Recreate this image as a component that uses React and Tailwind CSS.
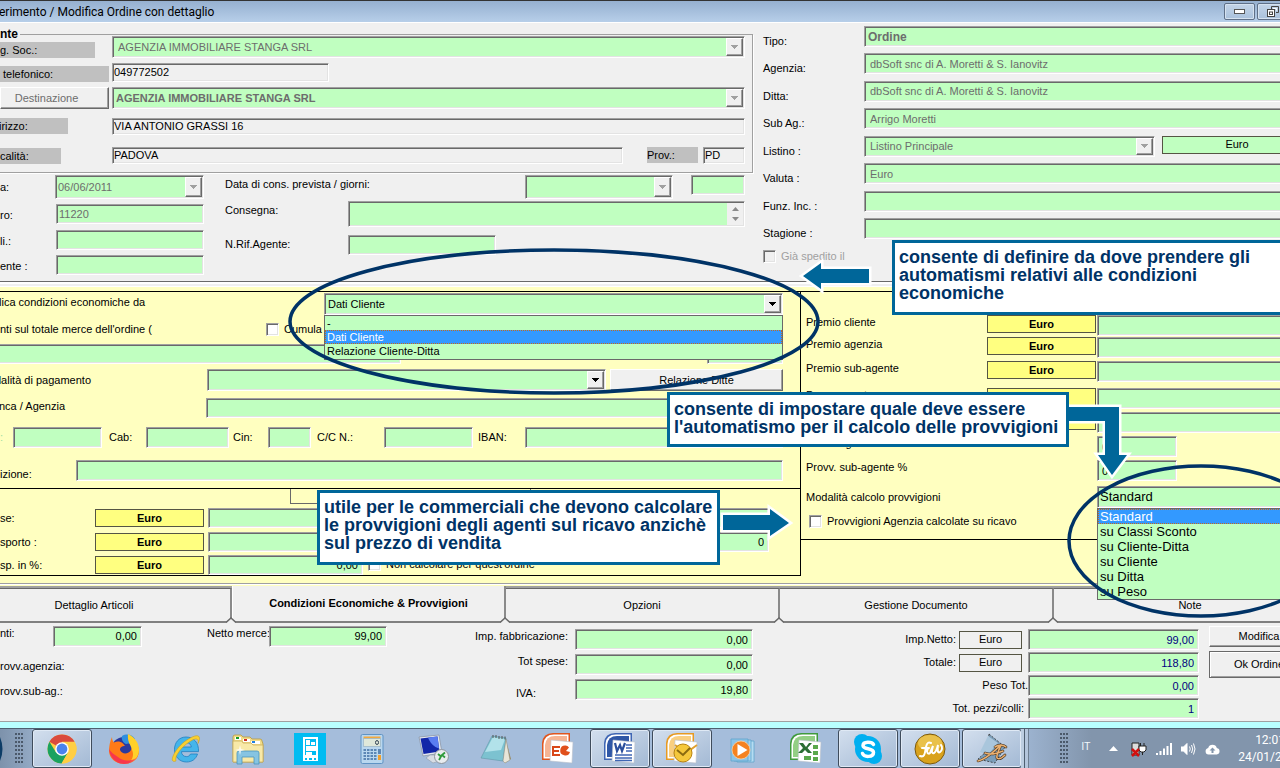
import React from "react";

const SUNKEN =
  "border border-t-[#a0a0a0] border-l-[#a0a0a0] border-b-white border-r-white shadow-[inset_1px_1px_0_#696969,inset_-1px_-1px_0_#e3e3e3] rounded-none outline-none";
const GREEN = "bg-[#c0ffc0]";
const RAISED =
  "border border-t-white border-l-white border-b-[#696969] border-r-[#696969] shadow-[inset_-1px_-1px_0_#a0a0a0] bg-[#f0f0f0]";

function Field({ className = "", tone = GREEN, ...props }) {
  return <input type="text" className={`block min-w-0 px-1 ${SUNKEN} ${tone} ${className}`} {...props} />;
}

function Arrow({ disabled }) {
  return (
    <span className={`pointer-events-none absolute top-[2px] right-[2px] bottom-[2px] flex w-[17px] items-center justify-center ${RAISED}`}>
      <svg width="7" height="4" viewBox="0 0 7 4" shapeRendering="crispEdges">
        <path d="M0 0h7v1h-1v1h-1v1h-1v1h-1v-1h-1v-1h-1v-1h-1z" fill={disabled ? "#a0a0a0" : "#000"} />
      </svg>
    </span>
  );
}

function Select({ id, label, value, className = "", text = "pl-1", disabled, children }) {
  return (
    <div className={`relative flex min-w-0 ${className}`}>
      <select id={id} aria-label={label} defaultValue={value} className={`w-full appearance-none pr-5 ${SUNKEN} ${GREEN} ${text}`}>
        <option>{value}</option>
      </select>
      <Arrow disabled={disabled} />
      {children}
    </div>
  );
}

function EuroButton({ tone = "bg-[#ffff80] font-bold", className = "" }) {
  return (
    <button type="button" className={`flex shrink-0 items-center justify-center border border-[#555544] ${tone} ${className}`}>
      Euro
    </button>
  );
}

function Check({ id, label, className = "", disabled }) {
  return (
    <span className={`flex h-[13px] items-center gap-[5px] whitespace-nowrap ${className}`}>
      <input
        id={id}
        type="checkbox"
        className={`size-[13px] shrink-0 appearance-none ${SUNKEN} ${disabled ? "bg-[#f0f0f0]" : "bg-white"}`}
      />
      <label htmlFor={id} className={disabled ? "text-[#a0a0a0]" : ""}>
        {label}
      </label>
    </span>
  );
}

/* ---------- header ---------- */

function TitleBar() {
  const box = "flex h-[17px] w-[31px] items-center justify-center rounded-xs border border-[#5f7088] bg-linear-to-b from-[#c3d4e8] to-[#a9c1dc] shadow-[inset_0_0_0_1px_#d5e2f0]";
  return (
    <header className="flex h-[23px] items-center border-t border-b border-t-[#333] border-b-white bg-linear-to-b from-[#96b0d0] to-[#b7cfe9]">
      <h1 className="-ml-px font-[Roboto,'Open_Sans',sans-serif] text-xs whitespace-nowrap text-black">
        erimento / Modifica Ordine con dettaglio
      </h1>
      <div className="-mr-2 ml-auto flex gap-[2px]">
        <button type="button" aria-label="Riduci a icona" className={box}>
          <svg width="11" height="5" viewBox="0 0 11 5">
            <rect x=".5" y=".5" width="10" height="4" fill="#fff" stroke="#555" />
          </svg>
        </button>
        <button type="button" aria-label="Ripristina" className={box}>
          <svg width="12" height="11" viewBox="0 0 12 11" fill="none" stroke="#444">
            <path d="M4.500 3V.5h7v6H9" />
            <path d="M6 2.500h3.500v2" stroke="#fff" />
            <rect x=".5" y="3.500" width="7" height="7" fill="#fff" />
            <rect x="2.500" y="6" width="3" height="2.500" />
          </svg>
        </button>
      </div>
    </header>
  );
}

function CustomerGroup() {
  const tag = "flex h-4 items-center bg-[#c0c0c0]";
  return (
    <fieldset className="-ml-3 border border-[#a0a0a0] pb-2 pl-[11px] shadow-[1px_1px_0_#fff]">
      <legend className="h-[13px] pr-[2px] text-xs leading-[13px] font-bold">nte</legend>
      <div className="-mt-[5px] flex flex-col pr-[7px]">
        <div className="flex h-[22px]">
          <div className="flex w-[112px] shrink-0 items-end">
            <label htmlFor="ragsoc" className={`${tag} w-[95px]`}>g. Soc.:</label>
          </div>
          <Select id="ragsoc" value="AGENZIA IMMOBILIARE STANGA SRL" disabled className="flex-1" text="pl-[5px] text-[#6d6d6d]" />
        </div>
        <div className="mt-[5px] flex h-[19px]">
          <div className="flex w-[112px] shrink-0 items-end">
            <label htmlFor="tel" className={`${tag} w-[109px] pl-[3px]`}>telefonico:</label>
          </div>
          <Field id="tel" defaultValue="049772502" tone="bg-[#f0f0f0]" className="w-[217px] pl-px" />
        </div>
        <div className="mt-[5px] flex h-[22px]">
          <div className="flex w-[112px] shrink-0">
            <button type="button" className={`w-[109px] pr-4 text-[#6d6d6d] ${RAISED}`}>Destinazione</button>
          </div>
          <Select id="dest" label="Destinazione" value="AGENZIA IMMOBILIARE STANGA SRL" disabled className="flex-1" text="pl-[3px] font-bold text-[#6d6d6d]" />
        </div>
        <div className="mt-[9px] flex h-[17px]">
          <div className="flex w-[112px] shrink-0">
            <label htmlFor="ind" className={`${tag} w-[68px]`}><span className="-ml-px">irizzo:</span></label>
          </div>
          <Field id="ind" defaultValue="VIA ANTONIO GRASSI 16" tone="bg-[#f0f0f0]" className="flex-1 pl-px" />
        </div>
        <div className="mt-3 flex h-[17px]">
          <div className="flex w-[112px] shrink-0 items-end">
            <label htmlFor="loc" className={`${tag} w-[61px]`}>calità:</label>
          </div>
          <Field id="loc" defaultValue="PADOVA" tone="bg-[#f0f0f0]" className="flex-1 pl-px" />
          <label htmlFor="prov" className={`${tag} mr-[5px] ml-6 w-[51px]`}>Prov.:</label>
          <Field id="prov" defaultValue="PD" tone="bg-[#f0f0f0]" className="w-[42px] pl-px" />
        </div>
      </div>
    </fieldset>
  );
}

function OrderData() {
  return (
    <div className="flex pt-[2px] pr-[8px]">
      <div className="flex w-[204px] shrink-0 flex-col">
        <div className="flex h-6">
          <label htmlFor="data" className="w-[55px] shrink-0 leading-6">a:</label>
          <Select id="data" value="06/06/2011" disabled className="flex-1" text="pl-[2px] text-[#6d6d6d]" />
        </div>
        <div className="mt-[5px] flex h-5">
          <label htmlFor="numero" className="w-[56px] shrink-0 leading-[22px]">ro:</label>
          <Field id="numero" defaultValue="11220" className="flex-1 px-[2px] text-[#6d6d6d]" />
        </div>
        <div className="mt-[6px] flex h-5">
          <label htmlFor="colli" className="w-[56px] shrink-0 leading-[22px]">li.:</label>
          <Field id="colli" className="flex-1" />
        </div>
        <div className="mt-[5px] flex h-5">
          <label htmlFor="cliente" className="w-[56px] shrink-0 leading-[22px]">ente :</label>
          <Field id="cliente" className="flex-1" />
        </div>
      </div>
      <div className="flex flex-1 flex-col pl-[21px]">
        <div className="flex h-6">
          <label htmlFor="consprev" className="flex-1 leading-[18px]">Data di cons. prevista / giorni:</label>
          <Select id="consprev" value="" disabled className="w-[148px]" />
          <Field aria-label="giorni" className="ml-[18px] h-5 w-[54px]" />
        </div>
        <div className="mt-[2px] flex h-[26px]">
          <label htmlFor="consegna" className="w-[123px] shrink-0 leading-[18px]">Consegna:</label>
          <div className="relative flex flex-1">
            <textarea id="consegna" className={`w-full resize-none ${SUNKEN} ${GREEN}`} />
            <span className="pointer-events-none absolute top-[2px] right-[2px] bottom-[2px] flex w-4 flex-col items-center justify-between bg-[#f0f0f0] py-1">
              <svg width="7" height="4" viewBox="0 0 7 4"><path d="M0 4h7L3.500 0z" fill="#8a8a8a" /></svg>
              <svg width="7" height="4" viewBox="0 0 7 4"><path d="M0 0h7L3.500 4z" fill="#8a8a8a" /></svg>
            </span>
          </div>
        </div>
        <div className="mt-2 flex h-5">
          <label htmlFor="rif" className="w-[123px] shrink-0 leading-[18px]">N.Rif.Agente:</label>
          <Field id="rif" className="w-[148px]" />
        </div>
      </div>
    </div>
  );
}

function HeaderRow({ id, label, children }) {
  return (
    <div className="flex h-[21px] items-start">
      <label htmlFor={id} className="w-[101px] shrink-0 pt-[9px] leading-[13px]">{label}</label>
      {children}
    </div>
  );
}

function OrderHeader() {
  const grey = "h-[21px] flex-1 pl-[5px] text-[#6d6d6d]";
  return (
    <div className="-mr-8 flex flex-1 flex-col pt-[3px] pl-[10px]">
      <div className="flex h-[213px] flex-col justify-between">
        <HeaderRow id="tipo" label="Tipo:">
          <Field id="tipo" defaultValue="Ordine" className="h-[21px] flex-1 pl-[3px] text-xs font-bold text-[#6d6d6d]" />
        </HeaderRow>
        <HeaderRow id="agenzia" label="Agenzia:">
          <Field id="agenzia" defaultValue="dbSoft snc di A. Moretti & S. Ianovitz" className={grey} />
        </HeaderRow>
        <HeaderRow id="ditta" label="Ditta:">
          <Field id="ditta" defaultValue="dbSoft snc di A. Moretti & S. Ianovitz" className={grey} />
        </HeaderRow>
        <HeaderRow id="subag" label="Sub Ag.:">
          <Field id="subag" defaultValue="Arrigo Moretti" className={grey} />
        </HeaderRow>
        <HeaderRow id="listino" label="Listino :">
          <Select id="listino" value="Listino Principale" disabled className="h-[21px] flex-1" text="pl-[5px] text-[#6d6d6d]" />
          <EuroButton tone={GREEN} className="ml-[7px] h-[18px] w-[150px]" />
        </HeaderRow>
        <HeaderRow id="valuta" label="Valuta :">
          <Field id="valuta" defaultValue="Euro" className={grey} />
        </HeaderRow>
        <HeaderRow id="funz" label="Funz. Inc. :">
          <Field id="funz" className={grey} />
        </HeaderRow>
        <HeaderRow id="stagione" label="Stagione :">
          <Field id="stagione" className={grey} />
        </HeaderRow>
      </div>
      <Check id="spedito" label="Già spedito il" disabled className="mt-[11px]" />
    </div>
  );
}

/* ---------- conditions panel ---------- */

function CostRow({ id, label, className = "", value = "", children }) {
  return (
    <div className={`flex h-5 items-start ${className}`}>
      <label htmlFor={id} className="w-[95px] shrink-0 leading-5">{label}</label>
      <EuroButton className="mt-px h-[18px] w-[109px]" />
      <Field id={id} defaultValue={value} className="ml-1 h-5 w-[155px] text-right" />
      {children}
    </div>
  );
}

function ConditionsLeft() {
  return (
    <div className="w-[801px] shrink-0 border border-l-0 border-black pt-px">
      <div className="pr-[17px]">
        <div className="flex h-[22px]">
          <label htmlFor="cond" className="w-[324px] shrink-0 leading-[18px]"><span className="-ml-px">lica condizioni economiche da</span></label>
          <Select id="cond" value="Dati Cliente" className="flex-1" text="pl-[3px]">
            <ul role="listbox" aria-label="Condizioni economiche" className="absolute top-full right-0 left-0 z-10 border border-[#696969] bg-[#c0ffc0] pb-px leading-[14px]">
              <li role="option" className="px-[2px]">-</li>
              <li role="option" aria-selected="true" className="bg-[#3399ff] px-[2px] text-white outline outline-dotted -outline-offset-1 outline-[#c66a1c]">Dati Cliente</li>
              <li role="option" className="px-[2px]">Relazione Cliente-Ditta</li>
            </ul>
          </Select>
        </div>
        <div className="mt-2 flex h-[13px] items-center">
          <span className="w-[266px] shrink-0 whitespace-nowrap">nti sul totale merce dell'ordine (</span>
          <Check id="cumula" label="Cumula gli sconti" />
        </div>
        <div className="mt-2 flex h-5">
          <Field aria-label="Sconti" className="-ml-2 w-[409px]" />
          <Field aria-label="Sconto totale" className="ml-auto w-[76px]" />
        </div>
        <div className="mt-[5px] flex h-[22px]">
          <label htmlFor="pagamento" className="w-[207px] shrink-0 leading-[22px]"><span className="-ml-[5px]">dalità di pagamento</span></label>
          <Select id="pagamento" value="" className="flex-1" />
          <button type="button" className={`ml-1 w-[173px] ${RAISED}`}>Relazione Ditte</button>
        </div>
        <div className="mt-[7px] flex h-5">
          <label htmlFor="banca" className="w-[206px] shrink-0 leading-4"><span className="-ml-px">nca / Agenzia</span></label>
          <Field id="banca" className="flex-1" />
        </div>
        <div className="mt-[9px] flex h-[21px] leading-5">
          <label htmlFor="abi" className="w-[13px] shrink-0 text-[#9fe0a0]">:</label>
          <Field id="abi" className="w-[89px]" />
          <label htmlFor="cab" className="ml-[7px] w-[37px] shrink-0">Cab:</label>
          <Field id="cab" className="w-[83px]" />
          <label htmlFor="cin" className="ml-1 w-[35px] shrink-0">Cin:</label>
          <Field id="cin" className="w-[43px]" />
          <label htmlFor="cc" className="ml-[6px] w-[67px] shrink-0">C/C N.:</label>
          <Field id="cc" className="w-[89px]" />
          <label htmlFor="iban" className="ml-[5px] w-[47px] shrink-0">IBAN:</label>
          <Field id="iban" className="flex-1" />
        </div>
        <div className="mt-3 flex h-[21px]">
          <label htmlFor="spedizione" className="w-[76px] shrink-0 pt-2 leading-[13px]">izione:</label>
          <Field id="spedizione" className="flex-1" />
        </div>
      </div>
      <div className="mt-[7px] flex border-t border-black">
        <div className="ml-[290px] h-[15px] w-[241px] border border-t-0 border-[#696969]" />
      </div>
      <div className="mt-1 pr-[31px]">
        <CostRow id="spese" label="se:">
          <Field aria-label="Colli" className="ml-auto h-5 w-[178px]" />
        </CostRow>
        <CostRow id="trasporto" label="sporto :" className="mt-1">
          <Field aria-label="Pezzi" defaultValue="0" className="ml-auto h-5 w-[178px] text-right" />
        </CostRow>
        <CostRow id="trasp" label="sp. in %:" value="0,00" className="mt-[3px]">
          <Check id="noncalc" label="Non calcolare per quest'ordine" className="mt-[3px] ml-[5px]" />
        </CostRow>
      </div>
    </div>
  );
}

function PrizeRow({ id, label, euro, value = "", short, className = "" }) {
  return (
    <div className={`flex h-[21px] items-start ${className}`}>
      <label htmlFor={id} className="w-[181px] shrink-0 leading-[14px]">{label}</label>
      {euro ? <EuroButton className="h-[18px] w-[109px]" /> : <span className="w-[109px] shrink-0" />}
      <Field id={id} defaultValue={value} className={`ml-px h-[21px] ${short ? "w-[80px]" : "flex-1"}`} />
    </div>
  );
}

function ConditionsRight() {
  const options = ["Standard", "su Classi Sconto", "su Cliente-Ditta", "su Cliente", "su Ditta", "su Peso"];
  return (
    <div className="-mr-8 flex-1 self-start border-t border-b border-black pt-[23px] pb-[11px] pl-[5px]">
      <PrizeRow id="p1" label="Premio cliente" euro />
      <PrizeRow id="p2" label="Premio agenzia" euro className="mt-px" />
      <PrizeRow id="p3" label="Premio sub-agente" euro className="mt-[3px]" />
      <PrizeRow id="p4" label="Provv. agente" euro className="mt-[6px]" />
      <PrizeRow id="p5" label="Provv. sub-agente" euro className="mt-[3px]" />
      <PrizeRow id="p6" label="Provv. agenzia %" value="0" short className="mt-[3px]" />
      <PrizeRow id="p7" label="Provv. sub-agente %" value="0" short className="mt-[3px]" />
      <div className="mt-[5px] flex h-[22px]">
        <label htmlFor="modcalc" className="w-[291px] shrink-0 leading-[22px]">Modalità calcolo provvigioni</label>
        <Select id="modcalc" value="Standard" className="flex-1" text="pl-[2px] text-[13px]">
          <ul role="listbox" aria-label="Modalità calcolo provvigioni" className="absolute top-full right-0 left-0 z-10 border border-[#696969] bg-[#c0ffc0] text-[13px] leading-[15px]">
            {options.map((o, i) => (
              <li
                key={o}
                role="option"
                aria-selected={i === 0}
                className={i === 0 ? "bg-[#3399ff] px-[2px] text-white outline outline-dotted -outline-offset-1 outline-[#c66a1c]" : "px-[2px]"}
              >
                {o}
              </li>
            ))}
          </ul>
        </Select>
      </div>
      <Check id="ricavo" label="Provvigioni Agenzia calcolate su ricavo" className="mt-[7px] ml-[3px]" />
    </div>
  );
}

/* ---------- tabs and totals ---------- */

function TabJoint() {
  return (
    <svg className="absolute -right-[6px] -bottom-[2px] z-10" width="10" height="6" viewBox="0 0 10 6">
      <path d="M0 6L5 1l5 5z" fill="#f0f0f0" />
      <path d="M0 5.500L5 1l5 4.500" fill="none" stroke="#696969" strokeWidth="1.500" />
    </svg>
  );
}

function Tabs() {
  const tab = "relative flex w-[274px] shrink-0 items-center justify-center border-b-2 border-b-[#808080] border-r-2 border-r-[#8a8a8a] bg-[#f0f0f0]";
  return (
    <nav className="-ml-[42px] flex h-[37px] bg-[#a0a0a0]" role="tablist">
      {["Dettaglio Articoli", "Condizioni Economiche & Provvigioni", "Opzioni", "Gestione Documento", "Note"].map((t, i) => (
        <button
          key={t}
          type="button"
          role="tab"
          aria-selected={i === 1}
          className={i === 1 ? `${tab} border-l border-l-white font-bold` : `${tab} mt-[2px] border-t border-t-[#696969]`}
        >
          {t}
          <TabJoint />
        </button>
      ))}
    </nav>
  );
}

function SumRow({ id, label, value, low, width = "w-[178px]" }) {
  return (
    <div className={`flex h-[21px] justify-end whitespace-nowrap ${low ? "items-end" : "items-start"}`}>
      <label htmlFor={id} className={`leading-[14px] ${low ? "mr-[39px]" : "mr-[7px]"}`}>{label}</label>
      <Field id={id} defaultValue={value} className={`h-[21px] text-right ${width}`} />
    </div>
  );
}

function Totals() {
  const total = "h-[21px] w-[171px] text-right text-[#000080]";
  return (
    <section className="flex items-start overflow-hidden border-b border-[#a0a0a0] pt-[3px] pb-[2px]">
      <div className="w-[387px] shrink-0">
        <div className="flex h-[21px]">
          <label htmlFor="sconti" className="w-[53px] shrink-0 leading-[14px]">nti:</label>
          <Field id="sconti" defaultValue="0,00" className="w-[89px] text-right" />
          <label htmlFor="netto" className="ml-[65px] w-[62px] shrink-0 leading-[14px] whitespace-nowrap">Netto merce:</label>
          <Field id="netto" defaultValue="99,00" className="flex-1 text-right" />
        </div>
        <p className="mt-3 leading-[14px]">rovv.agenzia:</p>
        <p className="mt-[11px] leading-[14px]">rovv.sub-ag.:</p>
      </div>
      <div className="flex w-[366px] shrink-0 flex-col gap-1 pt-[3px]">
        <SumRow id="fabb" label="Imp. fabbricazione:" value="0,00" />
        <SumRow id="spesetot" label="Tot spese:" value="0,00" />
        <SumRow id="iva" label="IVA:" value="19,80" low />
      </div>
      <div className="ml-auto flex shrink-0 flex-col gap-[2px] pt-[3px]">
        <div className="flex h-[21px] items-center justify-end">
          <label htmlFor="impnetto" className="mr-[3px]">Imp.Netto:</label>
          <EuroButton tone="bg-[#f0f0f0]" className="mr-[6px] h-[18px] w-[63px]" />
          <Field id="impnetto" defaultValue="99,00" className={total} />
        </div>
        <div className="flex h-[21px] items-center justify-end">
          <label htmlFor="totale" className="mr-[3px]">Totale:</label>
          <EuroButton tone="bg-[#f0f0f0]" className="mr-[6px] h-[18px] w-[63px]" />
          <Field id="totale" defaultValue="118,80" className={total} />
        </div>
        <div className="flex h-[21px] items-center justify-end">
          <label htmlFor="peso">Peso Tot.</label>
          <Field id="peso" defaultValue="0,00" className={total} />
        </div>
        <div className="flex h-[21px] items-center justify-end">
          <label htmlFor="pezzi" className="mr-1">Tot. pezzi/colli:</label>
          <Field id="pezzi" defaultValue="1" className={total} />
        </div>
      </div>
      <div className="-mr-[29px] ml-[10px] flex w-[100px] shrink-0 flex-col gap-1">
        <button type="button" className={`h-[21px] ${RAISED}`}>Modifica</button>
        <button type="button" className="h-[27px] border border-[#696969] bg-[#f0f0f0] shadow-[inset_1px_1px_0_#fff,inset_-1px_-1px_0_#a0a0a0]">Ok Ordine</button>
      </div>
    </section>
  );
}

/* ---------- taskbar ---------- */

const Svg = ({ children }) => (
  <svg width="32" height="32" viewBox="0 0 32 32" aria-hidden="true">{children}</svg>
);

const Chrome = () => (
  <Svg>
    <circle cx="16" cy="16" r="14.500" fill="#ffce44" />
    <path d="M16 16L3.440 8.750A14.500 14.500 0 0 1 28.560 8.750H16z" fill="#da4b3e" />
    <path d="M3.440 8.750A14.500 14.500 0 0 0 15.500 30.500L22 19.500 16 16 9.900 19.300z" fill="#1aa260" />
    <path d="M16 9h12.700a14.500 14.500 0 0 1-13 21.500L22.300 19z" fill="#ffce44" />
    <circle cx="16" cy="16" r="6.800" fill="#fff" />
    <circle cx="16" cy="16" r="5.400" fill="#4a83ee" />
  </Svg>
);

const Firefox = () => (
  <Svg>
    <circle cx="16" cy="17" r="13" fill="#2b3a9e" />
    <path d="M14 3c5-3 11-1 13 3l-1 7c-3-3-6-3-8-2-3-1-5-5-4-8z" fill="#2f8fe0" />
    <path d="M4 4c0 2 .5 4 2 5.500C9 8 12 8 15 10.500l2 2.500c-3 0-5 1-5 4 2 5 9 4 11 0 2-4 1-8-1-12 6 3 9 8 9 13 0 8-7 13-15 13S1 25 1 18C1 13 2 8 4 4z" fill="#ff7a18" />
    <path d="M20 1c8 4 11 10 11 16 0 6-4 11-10 13 4-4 5-9 3-13-1-5-5-8-4-16z" fill="#ffd12a" />
    <path d="M1 15c0 9 7 16 15 16 5 0 9-2 12-6-6 4-14 3-18-1-4-3-8-5-9-9z" fill="#f5205e" opacity=".75" />
  </Svg>
);

const Explorer = () => (
  <Svg>
    <path d="M16 4C9 4 4.500 9.500 4.500 16.500S9.500 29 16.500 29c5.500 0 9.500-3 11-8h-7c-1 2-2.300 2.600-4 2.600-3 0-5-2-5-5H28.500C29 10 24 4 16 4zm-4.300 10c.4-2.700 2.200-4.300 4.800-4.300s4.500 1.600 4.800 4.300z" fill="#45b5ea" stroke="#1f7fc0" strokeWidth=".8" fillRule="evenodd" />
    <path d="M6 28C-2 31 4 17 14 9 22 3 30 0 29.500 6c-.1 1.500-.8 3-1.500 4.500 1-5-2-6-8-2C11 14 4 24 6 28z" fill="#f8cf32" stroke="#c89a10" strokeWidth=".5" />
  </Svg>
);

const Folder = () => (
  <Svg>
    <path d="M1 4q0-2 2-2h6l2 2h7l2 2h8q2 0 2 2l1 3v18H1z" fill="#f2dd8a" stroke="#b99a3f" strokeWidth=".8" />
    <path d="M3 4h6v3H3zM11 6h7v3h-7zM19 8h9v3h-9z" fill="#fff" />
    <path d="M4 4h3v2H4z" fill="#159a2a" />
    <path d="M12 6h3v2h-3z" fill="#d03020" />
    <path d="M20 8h3v2h-3z" fill="#2080e0" />
    <path d="M1 8h9l1 2h8l2 2h10v17H1z" fill="#f8e9a8" stroke="#c9ae5a" strokeWidth=".8" />
    <path d="M5 31V20q0-2 2-2h18q2 0 2 2v11h-5v-7H10v7z" fill="#86c4e2" stroke="#4a94be" strokeWidth=".8" />
    <path d="M8 12l1 4 4 1-4 1-1 4-1-4-4-1 4-1z" fill="#fff" opacity=".8" />
  </Svg>
);

const Store = () => (
  <Svg>
    <path d="M0 0h32v32H0z" fill="#00bcf2" />
    <path d="M9 4h15v24H9z" fill="#fff" />
    <path d="M11 6h11v16H11z" fill="#00bcf2" />
    <path d="M12 7h4v5h-4zM17 9h4v3h-4zM12 13h10v5H12zM12 19h6v3h-6z" fill="#fff" />
    <path d="M11 25h2v2h-2zM15 25h3v2h-3zM20 25h2v2h-2z" fill="#00bcf2" />
  </Svg>
);

const Calc = () => (
  <Svg>
    <rect x="5" y="1.500" width="22" height="29" rx="1.500" fill="#b9d7ef" stroke="#5f93c4" />
    <path d="M7.500 3.500h17v2h-17z" fill="#f3a93c" />
    <path d="M7.500 5.500h17v8h-17z" fill="#dfe8da" stroke="#8fa9bd" strokeWidth=".6" />
    <ellipse cx="21" cy="9.500" rx="1.500" ry="2" fill="none" stroke="#345" />
    <g fill="#5c87b5">
      {[16, 19, 22, 25].map((y) => [7.5, 11, 14.5, 18].map((x) => <rect key={`${x}-${y}`} x={x} y={y} width="2.500" height="2" />))}
      <rect x="22" y="16" width="3" height="5" />
    </g>
    <rect x="22" y="22" width="3" height="5" fill="#f0a030" />
  </Svg>
);

const Remote = () => (
  <Svg>
    <path d="M1 4l20-2 3 18-19 3z" fill="#e4e8ee" stroke="#8b97a8" strokeWidth=".8" />
    <path d="M2.500 5.500l17-2 2 15-16 2.500z" fill="#1226a8" />
    <path d="M10 4.500l9.500-1 1.500 12C16 14 12 10 10 4.500z" fill="#5a7cf0" />
    <path d="M8 25l4-3h6l3 6-6 2z" fill="#d8dde4" stroke="#909aa8" strokeWidth=".6" />
    <circle cx="23.500" cy="23.500" r="7" fill="#e9ecef" stroke="#8e949c" />
    <path d="M20 21l3 2.500-2 3.500M27 19.500L24 22l3 2.500" fill="none" stroke="#2f9a3a" strokeWidth="1.800" />
  </Svg>
);

const Notepad = () => (
  <Svg>
    <path d="M25 4l6 22-6 4z" fill="#9b8c62" />
    <path d="M12 3l14 2-3 23-22-3z" fill="#7cc2d0" stroke="#6297a8" strokeWidth=".6" />
    <path d="M13 4l12 2-4 11L5 19z" fill="#b2e2ea" />
    <path d="M23 28l2 2 5-3-4-21z" fill="#e9e6d8" stroke="#8b8b7a" strokeWidth=".5" />
    <path d="M13 2v3M16 2v3M19 3v3M22 3v3M25 3.500v3" stroke="#555" />
  </Svg>
);

function OfficeShape({ color, light, children }) {
  return (
    <Svg>
      <path d="M0 27V10Q1 0 11 0h17v12L9 27z" fill={color} />
      <path d="M1.500 25.500V11Q2 1.500 12 1.500h14.500V12L9 25.500z" fill="#fff" />
      <path d="M3 24V12Q4 3 13 3h12v9L9 24z" fill={light} />
      <path d="M9 7l22 2-1 21-22-2z" fill="#fff" stroke="#b8bfca" strokeWidth=".6" />
      {children}
    </Svg>
  );
}

const Ppt = () => (
  <OfficeShape color="#e0561f" light="#f6b493">
    <path d="M10 13h8v2h-6v2h5v2h-5v2h6v2h-8z" fill="#d8481a" />
    <path d="M23.500 12.500a5 5 0 1 0 4.500 6.500l-4-1 3-3.500a5 5 0 0 0-3.500-2z" fill="#e0501c" />
  </OfficeShape>
);
const Word = () => (
  <OfficeShape color="#3f66b4" light="#2f57a6">
    <path d="M11 10l2 8 3-6 2 6 3-8" fill="none" stroke="#2b4f9c" strokeWidth="2.200" />
    <path d="M22 12h6M22 15h6M22 18h6M11 22h17M11 25h17M11 27.500h17" stroke="#3f66b4" strokeWidth="1.500" />
  </OfficeShape>
);
const Outlook = () => (
  <OfficeShape color="#e79a22" light="#f9cf80">
    <path d="M9 12l11 8 11-8" fill="none" stroke="#e0a030" strokeWidth="2" />
    <circle cx="17" cy="20" r="9" fill="#f5c83c" stroke="#b98310" />
    <path d="M11 17l6 5 7-7" fill="none" stroke="#8a6a10" strokeWidth="2" />
  </OfficeShape>
);
const Excel = () => (
  <OfficeShape color="#3f9a3c" light="#93cf84">
    <path d="M9 10h4l3 4 3-4h3l-4.500 5 4.500 5h-4l-3-3-3 3H8l5-5z" fill="#2b6e34" />
    <path d="M23 12h5v4h-5zM23 18h5v4h-5zM14 23h7v4h-7zM23 24h5v4h-5z" fill="#5aa84c" />
  </OfficeShape>
);

const Player = () => (
  <Svg>
    <path d="M9 8h17v21H9z" fill="#b5dcf2" stroke="#5fa4cc" strokeWidth=".8" />
    <path d="M6 7h17v21H6z" fill="#a4d2ee" stroke="#5fa4cc" strokeWidth=".8" />
    <path d="M3 6h17v22H3z" fill="#8cc4e8" stroke="#5fa4cc" strokeWidth=".8" />
    <circle cx="13" cy="17" r="9" fill="#f58220" stroke="#fbd0a0" strokeWidth=".8" />
    <path d="M9.500 11l10 6-10 6z" fill="#fff" />
  </Svg>
);

const Skype = () => (
  <Svg>
    <circle cx="10" cy="9" r="8" fill="#00aff0" />
    <circle cx="22" cy="23" r="8" fill="#00aff0" />
    <circle cx="16" cy="16" r="13" fill="#00aff0" />
    <path d="M21.500 11.500C20 8.500 11 8 11 12.500c0 4.500 10.500 2 10.500 7 0 5-9.500 5-11 1" fill="none" stroke="#fff" strokeWidth="3.500" strokeLinecap="round" />
  </Svg>
);

const Gold = () => (
  <Svg>
    <circle cx="16" cy="16" r="15" fill="#d9a21c" stroke="#7a5a10" />
    <ellipse cx="16" cy="10" rx="12" ry="8" fill="#f0cf60" opacity=".7" />
    <path d="M6 23c5 2 5-4 6-9s3-5 5-4M8 15h7M14 15c-2 4 0 7 2 5l3-7c-2 6-1 8 1 7s3-4 4-8c-1 5 0 9 2 7 2-1 3-5 1-7" fill="none" stroke="#fff" strokeWidth="2" strokeLinecap="round" />
  </Svg>
);

const Script = () => (
  <Svg>
    <path d="M13 1l16 13-10 16L2 26l9-8z" fill="#7b9db8" stroke="#333" strokeWidth=".8" strokeDasharray="2 1.500" />
    <path d="M12 3l10 7-10 12-8-3z" fill="#a9c6dc" />
    <path d="M2 28c9-2 16-10 23-16-2 5-5 10-4 13 2 2 5 0 8-3M9 20c5 2 11 1 18-2M19 14c4-3 9-2 11 0" fill="none" stroke="#3a2a1a" strokeWidth="2.600" strokeLinecap="round" />
    <path d="M2 28c9-2 16-10 23-16-2 5-5 10-4 13 2 2 5 0 8-3M9 20c5 2 11 1 18-2M19 14c4-3 9-2 11 0" fill="none" stroke="#eab070" strokeWidth="1.600" strokeLinecap="round" />
  </Svg>
);

function Grip() {
  return (
    <svg width="9" height="31" viewBox="0 0 9 31" className="shrink-0" aria-hidden="true" shapeRendering="crispEdges">
      {[0, 4, 8, 12, 16, 20, 24, 28].map((y) => [0, 3, 6].map((x) => <rect key={`${x}-${y}`} x={x} y={y} width="2" height="2" fill="#4b596a" />))}
    </svg>
  );
}

function TaskBar() {
  const apps = [
    ["Chrome", Chrome, 1], ["Firefox", Firefox], ["Internet Explorer", Explorer], ["Esplora risorse", Folder], ["Store", Store],
    ["Calcolatrice", Calc], ["Desktop remoto", Remote], ["Blocco note", Notepad], ["PowerPoint", Ppt], ["Word", Word, 1],
    ["Outlook", Outlook, 1], ["Media Player", Player], ["Excel", Excel], ["Skype", Skype, 1], ["Gestionale", Gold, 1], ["Editor", Script, 1],
  ];
  return (
    <footer className="flex h-10 overflow-hidden border-t border-[#4e5f70] bg-[#a5bddb]">
      <div className="flex w-8 shrink-0 items-center bg-linear-to-r from-[#7d92ab] to-[#93a9c4]">
        <svg width="3" height="24" viewBox="0 0 3 24" className="mr-3"><path d="M0 0q5 12 0 24z" fill="#0c3c66" /></svg>
        <Grip />
      </div>
      <div className="flex shrink-0 gap-[2px]">
        {apps.map(([name, Icon, open]) => (
          <button
            key={name}
            type="button"
            aria-label={name}
            className={
              open
                ? "flex w-[60px] items-center justify-center rounded-[3px] border border-[#3f4c5c] bg-linear-to-br from-[#d3dfee] to-[#a3b9d4] shadow-[inset_0_0_0_1px_#dfe9f5]"
                : "flex w-[60px] items-center justify-center"
            }
          >
            <Icon />
          </button>
        ))}
      </div>
      <div className="-ml-5 w-4 shrink-0" />
      <div className="w-[3px] shrink-0" />
      <div className="-mr-[22px] flex flex-1 items-center justify-end bg-linear-to-r from-[#9fb6d3] to-[#8295ac] to-25% text-[#f4f8fc]">
        <div className="mr-auto flex h-full">
          <span className="w-[4px] border-r border-[#4e5f70] bg-[#bccde0]" />
          <span className="w-[4px] border-r border-[#6e7f92] bg-[#b4c6dc]" />
        </div>
        <Grip />
        <span className="mb-1 ml-3 w-7 shrink-0 font-['Open_Sans','Noto_Sans',sans-serif]">IT</span>
        <svg width="9" height="5" viewBox="0 0 9 5" className="mr-[13px] shrink-0"><path d="M0 5h9L4.500 0z" fill="#fff" /></svg>
        <svg width="16" height="16" viewBox="0 0 16 16" className="mr-[9px] shrink-0">
          <path d="M1 2h7v12H1z" fill="#ddd" stroke="#222" />
          <path d="M8 5h7v4l-2 2h-3l-2-2zM9.500 2v3M13 2v3M11.500 11v3" fill="#fff" stroke="#222" />
          <path d="M1 8l7 7M8 8l-7 7" stroke="#d01010" strokeWidth="2.500" />
        </svg>
        <svg width="16" height="12" viewBox="0 0 16 12" className="mr-[9px] shrink-0">
          <path d="M0 10h2v2H0zM3.500 8h2v4h-2zM7 5.500h2V12H7zM10.500 3h2v9h-2zM14 0h2v12h-2z" fill="#fff" />
        </svg>
        <svg width="15" height="14" viewBox="0 0 15 14" className="mr-[9px] shrink-0" fill="none" stroke="#fff">
          <path d="M0 5h2.500L6 1.500v11L2.500 9H0z" fill="#fff" />
          <path d="M8.500 4.500q1.500 2.500 0 5M10.500 3q2.500 4 0 8M12.500 1.500q3 5.500 0 11" />
        </svg>
        <svg width="15" height="12" viewBox="0 0 15 12" className="mr-[18px] shrink-0">
          <path d="M3.500 11.500a3.300 3.300 0 0 1-.3-6.500A4.500 4.500 0 0 1 11.800 5a3.300 3.300 0 0 1 0 6.500z" fill="#fff" />
          <path d="M7.500 4.500l3 3h-2V10h-2V7.500h-2z" fill="#8295ac" />
        </svg>
        <div className="shrink-0 text-center font-[Roboto,'Open_Sans',sans-serif] text-xs leading-[17px] text-white">
          <div>12:01</div>
          <div>24/01/2018</div>
        </div>
      </div>
    </footer>
  );
}

/* ---------- annotations ---------- */

function Callout({ className, children }) {
  return (
    <p className={`absolute z-30 border-[3px] border-[#006699] bg-white px-[4px] pt-[5px] text-lg leading-[18px] font-bold whitespace-nowrap text-[#003366] ${className}`}>
      {children}
    </p>
  );
}

function Annotations() {
  const arrow = { fill: "#006699", stroke: "#fff", strokeWidth: 5, paintOrder: "stroke", strokeLinejoin: "miter" };
  return (
    <>
      <svg className="pointer-events-none absolute top-[247px] left-[287px] z-20" width="536" height="150" viewBox="0 0 536 150">
        <ellipse cx="267" cy="74.500" rx="264" ry="71.500" fill="none" stroke="#003366" strokeWidth="3.500" />
      </svg>
      <svg className="pointer-events-none absolute top-[462px] left-[1066px] z-20" width="270" height="158" viewBox="0 0 270 158">
        <ellipse cx="135" cy="79" rx="132" ry="75" fill="none" stroke="#003366" strokeWidth="3.500" />
      </svg>
      <svg className="pointer-events-none absolute top-[258px] left-[796px] z-20" width="80" height="38" viewBox="0 0 80 38">
        <path d="M7 18L25 5v6h48v14H25v6z" {...arrow} />
      </svg>
      <svg className="pointer-events-none absolute top-[400px] left-[1060px] z-20" width="76" height="84" viewBox="0 0 76 84">
        <path d="M5 7h54v48h8L52 75 38 55h7V21H5z" {...arrow} />
      </svg>
      <svg className="pointer-events-none absolute top-[502px] left-[716px] z-20" width="80" height="42" viewBox="0 0 80 42">
        <path d="M7 13h47V7l19 14-19 13v-6H7z" {...arrow} />
      </svg>
      <Callout className="top-[240px] left-[892px] h-[75px] w-[420px]">
        consente di definire da dove prendere gli
        <br />
        automatismi relativi alle condizioni
        <br />
        economiche
      </Callout>
      <Callout className="top-[392px] left-[667px] h-[55px] w-[402px]">
        consente di impostare quale deve essere
        <br />
        l'automatismo per il calcolo delle provvigioni
      </Callout>
      <Callout className="top-[490px] left-[317px] h-[75px] w-[403px]">
        utile per le commerciali che devono calcolare
        <br />
        le provvigioni degli agenti sul ricavo anzichè
        <br />
        sul prezzo di vendita
      </Callout>
    </>
  );
}

export default function App() {
  return (
    <div className="relative w-full overflow-hidden bg-[#f0f0f0] font-['Liberation_Sans',Arial,sans-serif] text-[11px] text-black">
      <TitleBar />
      <main>
        <section className="flex pb-[6px]">
          <div className="w-[753px] shrink-0 pt-[5px]">
            <CustomerGroup />
            <OrderData />
          </div>
          <OrderHeader />
        </section>
        <div className="h-[6px] border-t border-b border-t-[#696969] border-b-white bg-[#f0f0f0] shadow-[inset_0_2px_0_#fff]" />
        <section className="bg-[#ffffc0] pt-1 pb-[7px]">
          <div className="flex">
            <ConditionsLeft />
            <ConditionsRight />
          </div>
        </section>
        <div className="h-[3px] border-t border-b border-t-[#a0a0a0] border-b-[#ffffc0] bg-white" />
        <Tabs />
        <Totals />
      </main>
      <div className="h-[6px] bg-[#b8ffff]" />
      <TaskBar />
      <Annotations />
    </div>
  );
}
